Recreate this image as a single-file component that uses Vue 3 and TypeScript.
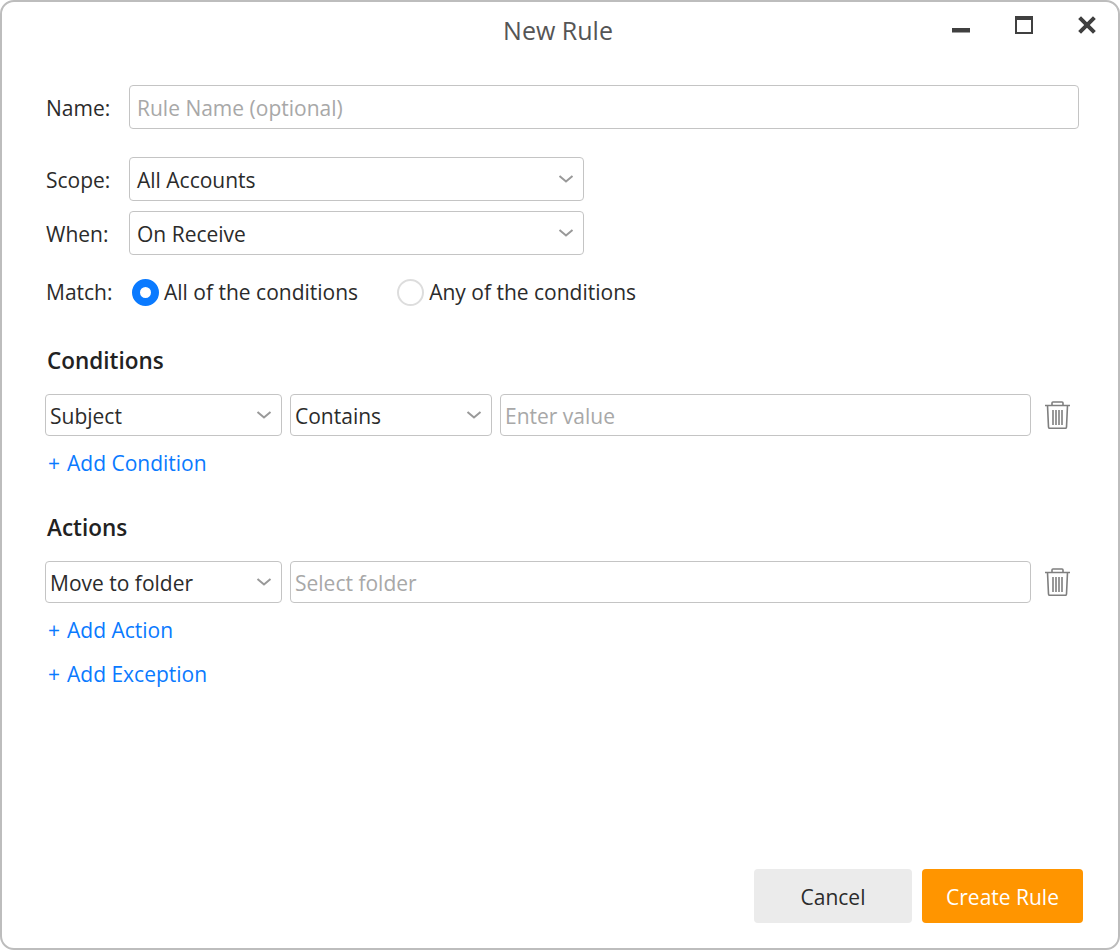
<script setup lang="ts">
import { ref } from 'vue'

const match = ref<'all' | 'any'>('all')
</script>

<template>
  <div class="window">
    <header class="titlebar">
      <h1 class="title">New Rule</h1>
      <div class="controls">
        <svg class="ctl" width="18" height="18" viewBox="0 0 18 18"><rect x="0" y="12" width="18" height="4.500" fill="#404040" /></svg>
        <svg class="ctl" width="18" height="18" viewBox="0 0 18 18"><path d="M1 1h16v16H1z M1 3h16" fill="none" stroke="#404040" stroke-width="2" /></svg>
        <svg class="ctl" width="18" height="18" viewBox="0 0 18 18"><path d="M1.600 1.600l14.800 14.800M16.400 1.600l-14.800 14.800" fill="none" stroke="#404040" stroke-width="4" /></svg>
      </div>
    </header>

    <div class="form">
      <div class="row name-row">
        <label class="lbl">Name:</label>
        <input class="field grow" placeholder="Rule Name (optional)" />
      </div>

      <div class="row scope-row">
        <label class="lbl">Scope:</label>
        <div class="field select w-scope"><span>All Accounts</span><svg class="chev" width="16" height="10" viewBox="0 0 16 10"><path d="M1.500 2l6.500 5.500L14.500 2" fill="none" stroke="#999" stroke-width="2" /></svg></div>
      </div>
      <div class="row when-row">
        <label class="lbl">When:</label>
        <div class="field select w-scope"><span>On Receive</span><svg class="chev" width="16" height="10" viewBox="0 0 16 10"><path d="M1.500 2l6.500 5.500L14.500 2" fill="none" stroke="#999" stroke-width="2" /></svg></div>
      </div>
      <div class="row match-row">
        <span class="lbl">Match:</span>
        <div class="radio-opt first" @click="match = 'all'">
          <span class="radio" :class="{ on: match === 'all' }"></span>
          <span>All of the conditions</span>
        </div>
        <div class="radio-opt" @click="match = 'any'">
          <span class="radio" :class="{ on: match === 'any' }"></span>
          <span>Any of the conditions</span>
        </div>
      </div>

      <h2 class="section conditions">Conditions</h2>
      <div class="line">
        <div class="field small select w-subject"><span>Subject</span><svg class="chev" width="16" height="10" viewBox="0 0 16 10"><path d="M1.500 2l6.500 5.500L14.500 2" fill="none" stroke="#999" stroke-width="2" /></svg></div>
        <div class="field small select w-contains"><span>Contains</span><svg class="chev" width="16" height="10" viewBox="0 0 16 10"><path d="M1.500 2l6.500 5.500L14.500 2" fill="none" stroke="#999" stroke-width="2" /></svg></div>
        <input class="field small grow" placeholder="Enter value" />
        <svg class="trash" width="26" height="28" viewBox="0 0 26 28" fill="none" stroke="#7f7f7f" stroke-width="1.600">
          <path d="M0 4.500h25M7 4.500V2a1 1 0 0 1 1-1h9a1 1 0 0 1 1 1v2.500M2.500 4.500l1 21.500a1.500 1.500 0 0 0 1.500 1.400h15a1.500 1.500 0 0 0 1.500-1.400l1-21.500M8 9v15M11 9v15M14 9v15M17 9v15" />
        </svg>
      </div>
      <a class="add"><span class="plus">+</span>Add Condition</a>

      <h2 class="section actions">Actions</h2>
      <div class="line">
        <div class="field small select w-subject"><span>Move to folder</span><svg class="chev" width="16" height="10" viewBox="0 0 16 10"><path d="M1.500 2l6.500 5.500L14.500 2" fill="none" stroke="#999" stroke-width="2" /></svg></div>
        <input class="field small grow" placeholder="Select folder" />
        <svg class="trash" width="26" height="28" viewBox="0 0 26 28" fill="none" stroke="#7f7f7f" stroke-width="1.600">
          <path d="M0 4.500h25M7 4.500V2a1 1 0 0 1 1-1h9a1 1 0 0 1 1 1v2.500M2.500 4.500l1 21.500a1.500 1.500 0 0 0 1.500 1.400h15a1.500 1.500 0 0 0 1.500-1.400l1-21.500M8 9v15M11 9v15M14 9v15M17 9v15" />
        </svg>
      </div>
      <a class="add"><span class="plus">+</span>Add Action</a>
      <a class="add exception"><span class="plus">+</span>Add Exception</a>
    </div>

    <footer class="footer">
      <button class="btn cancel">Cancel</button>
      <button class="btn primary">Create Rule</button>
    </footer>
  </div>
</template>

<style>
html, body { margin: 0; background: #fff; }
</style>

<style scoped>
.window {
  box-sizing: border-box;
  width: 1120px;
  height: 950px;
  display: flex;
  flex-direction: column;
  border: 2px solid #bdbdbd;
  border-radius: 14px;
  background: #fff;
  font-family: "Open Sans", "Noto Sans", sans-serif;
  font-size: 21px;
  color: #2b2b2b;
  overflow: hidden;
}
.titlebar {
  position: relative;
  box-sizing: border-box;
  height: 58px;
  padding: 0 4px 2px 0;
  display: flex;
  align-items: center;
  justify-content: center;
}
.title {
  margin: 0;
  font-size: 25px;
  font-weight: 400;
  color: #555;
}
.controls {
  position: absolute;
  top: 14px;
  right: 22px;
  display: flex;
  gap: 45px;
}
.form {
  flex: 1;
  padding: 25px 39px 0 44px;
  display: flex;
  flex-direction: column;
}
.row { display: flex; align-items: center; }
.lbl { width: 83px; flex: none; }
label.lbl { padding-top: 2px; }
.scope-row { margin-top: 28px; }
.when-row { margin-top: 10px; }
.match-row { height: 48px; margin-top: 13px; }
.field {
  box-sizing: border-box;
  height: 44px;
  border: 1px solid #c4c4c4;
  border-radius: 4px;
  background: #fff;
  padding: 2px 7px 0;
  font: inherit;
  color: inherit;
  outline: none;
  min-width: 0;
}
.field.small { height: 42px; padding: 2px 4px 0; }
.field::placeholder { color: #a8a8a8; opacity: 1; }
.grow { flex: 1; }
.select {
  display: flex;
  align-items: center;
  justify-content: space-between;
}
.select .chev { margin: -2px 2px 0 0; }
.small.select .chev { margin-right: 5px; }
.w-scope { width: 455px; }
.w-subject { width: 237px; flex: none; }
.w-contains { width: 202px; flex: none; }
.radio-opt { display: flex; align-items: center; gap: 5px; margin-right: 39px; }
.radio-opt.first { margin-left: 3px; }
.radio {
  box-sizing: border-box;
  width: 27px;
  height: 27px;
  border-radius: 50%;
  border: 2px solid #ddd;
  background: #fff;
}
.radio.on { border: 8px solid #0a7aff; }
.section {
  margin: 0 0 0 1px;
  font-size: 22.500px;
  font-weight: 600;
  color: #222;
  line-height: 30px;
}
.conditions { margin-top: 30px; }
.actions { margin-top: 37px; }
.line {
  margin-top: 18px;
  margin-left: -1px;
  display: flex;
  align-items: center;
  gap: 8px;
}
.trash { flex: none; margin: 0 8px 0 6px; }
.add {
  margin-top: 14px;
  line-height: 26px;
  color: #0a7aff;
  cursor: pointer;
}
.plus { display: inline-block; width: 19px; margin-left: 2px; }
.exception { margin-top: 18px; }
.footer {
  display: flex;
  justify-content: flex-end;
  gap: 10px;
  padding: 0 35px 25px 0;
}
.btn {
  height: 54px;
  border: none;
  border-radius: 4px;
  padding: 2px 0 0;
  font: inherit;
  cursor: pointer;
}
.cancel { width: 158px; background: #ebebeb; color: #2b2b2b; }
.primary { width: 161px; background: #ff9500; color: #fff; }
</style>
